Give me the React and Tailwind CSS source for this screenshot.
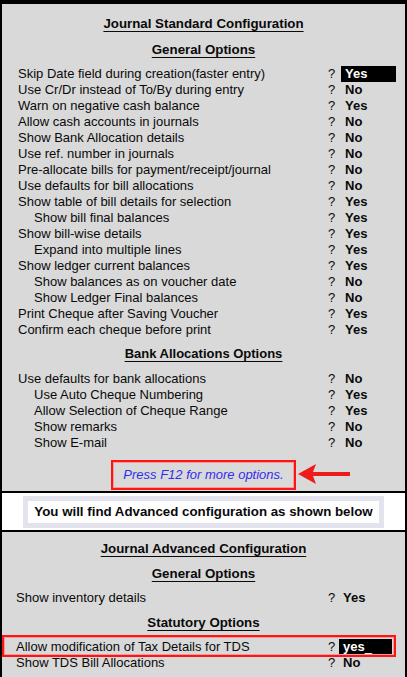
import React from "react";

const topRows = [
  ["Skip Date field during creation(faster entry)", "Yes", false, true],
  ["Use Cr/Dr instead of To/By during entry", "No"],
  ["Warn on negative cash balance", "Yes"],
  ["Allow cash accounts in journals", "No"],
  ["Show Bank Allocation details", "No"],
  ["Use ref. number in journals", "No"],
  ["Pre-allocate bills for payment/receipt/journal", "No"],
  ["Use defaults for bill allocations", "No"],
  ["Show table of bill details for selection", "Yes"],
  ["Show bill final balances", "Yes", true],
  ["Show bill-wise details", "Yes"],
  ["Expand into multiple lines", "Yes", true],
  ["Show ledger current balances", "Yes"],
  ["Show balances as on voucher date", "No", true],
  ["Show Ledger Final balances", "No", true],
  ["Print Cheque after Saving Voucher", "Yes"],
  ["Confirm each cheque before print", "Yes"],
];

const bankRows = [
  ["Use defaults for bank allocations", "No"],
  ["Use Auto Cheque Numbering", "Yes", true],
  ["Allow Selection of Cheque Range", "Yes", true],
  ["Show remarks", "No", true],
  ["Show E-mail", "No", true],
];

function Row({ label, value, indent, hl }) {
  return (
    <div className="flex h-4 leading-4 text-[13px] whitespace-nowrap">
      <span className={indent ? "w-[326px] pl-8" : "w-[326px] pl-4"}>{label}</span>
      <span className="w-[13px]">?</span>
      <span className={hl ? "w-[55px] pl-1 font-bold bg-black text-white" : "w-[55px] pl-1 font-bold"}>{value}</span>
    </div>
  );
}

function Row2({ label, value, children }) {
  return (
    <div className="flex h-4 leading-4 text-[13px] whitespace-nowrap">
      <span className="w-[326px] pl-[14px]">{label}</span>
      <span className="w-[11px]">?</span>
      {children ? children : <span className="w-[53px] pl-1 font-bold">{value}</span>}
    </div>
  );
}

function Header({ children, size }) {
  return (
    <div className="h-4 leading-4 text-center whitespace-nowrap">
      <span className={size === "s" ? "font-bold text-[13px] underline underline-offset-[3px] decoration-1" : "font-bold text-[13.3px] underline underline-offset-[3px] decoration-1"}>
        {children}
      </span>
    </div>
  );
}

export default function App() {
  return (
    <div className="w-[407px] h-[677px] bg-black pt-[4px] px-[2px] flex flex-col gap-[2px] overflow-hidden font-['Liberation_Sans',Arial,sans-serif] text-[#0a0a0a]">
      <div className="h-[487px] bg-[#d9d9d9] flex flex-col pt-[11px]">
        <Header>Journal Standard Configuration</Header>
        <div className="mt-[10px]">
          <Header>General Options</Header>
        </div>
        <div className="mt-[9px] flex flex-col">
          {topRows.map((r, i) => (
            <Row key={i} label={r[0]} value={r[1]} indent={r[2]} hl={r[3]} />
          ))}
        </div>
        <div className="mt-[7px]">
          <Header size="s">Bank Allocations Options</Header>
        </div>
        <div className="mt-[10px] flex flex-col">
          {bankRows.map((r, i) => (
            <Row key={i} label={r[0]} value={r[1]} indent={r[2]} />
          ))}
        </div>
        <div className="mt-[9px] flex justify-center">
          <div className="relative w-[185px] h-[30px] border-2 border-[#ff1414] shadow-[inset_0_0_0_1px_#f59a9a] flex items-center justify-center">
            <span className="italic text-[13px] text-[#2e2ef0] leading-4">Press F12 for more options.</span>
            <svg className="absolute left-[185px] top-[1px]" width="53" height="22" viewBox="0 0 53 22">
              <path d="M0 11 L18 1 L15 9 L52 9 L52 13 L15 13 L18 21 Z" fill="#ee1b1b" />
            </svg>
          </div>
        </div>
      </div>

      <div className="h-[37px] bg-white flex items-center justify-center">
        <div className="w-[361px] h-[32px] border-[5px] border-[#e3e3ee] bg-white flex items-center justify-center">
          <span className="font-bold text-[13.3px] leading-4 whitespace-nowrap">You will find Advanced configuration as shown below</span>
        </div>
      </div>

      <div className="h-[145px] bg-[#d9d9d9] flex flex-col pt-[8px]">
        <Header>Journal Advanced Configuration</Header>
        <div className="mt-[9px]">
          <Header>General Options</Header>
        </div>
        <div className="mt-[9px]">
          <Row2 label="Show inventory details" value="Yes" />
        </div>
        <div className="mt-[8px]">
          <Header>Statutory Options</Header>
        </div>
        <div className="mt-[9px] relative">
          <Row2 label="Allow modification of Tax Details for TDS">
            <span className="w-[53px] pl-1 font-bold bg-black text-white">
              yes<span className="font-normal">_</span>
            </span>
          </Row2>
          <div className="absolute -top-1 left-0 w-[394px] h-[22px] border-2 border-[#ff1414] shadow-[inset_0_0_0_1px_#f59a9a]"></div>
        </div>
        <Row2 label="Show TDS Bill Allocations" value="No" />
      </div>
    </div>
  );
}
